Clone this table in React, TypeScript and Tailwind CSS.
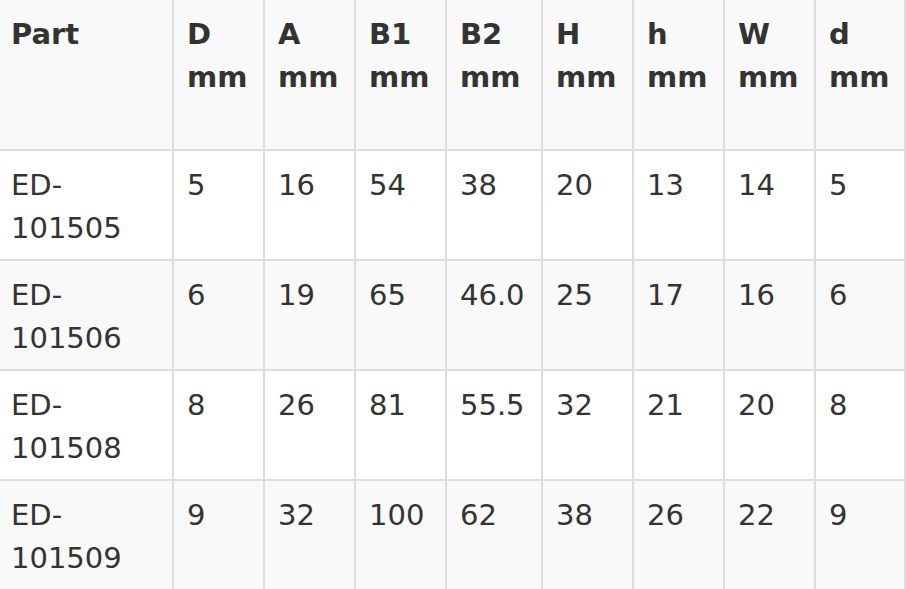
const headers = [
  ['Part', ''],
  ['D', 'mm'],
  ['A', 'mm'],
  ['B1', 'mm'],
  ['B2', 'mm'],
  ['H', 'mm'],
  ['h', 'mm'],
  ['W', 'mm'],
  ['d', 'mm'],
];

const rows = [
  ['ED-101505', '5', '16', '54', '38', '20', '13', '14', '5'],
  ['ED-101506', '6', '19', '65', '46.0', '25', '17', '16', '6'],
  ['ED-101508', '8', '26', '81', '55.5', '32', '21', '20', '8'],
  ['ED-101509', '9', '32', '100', '62', '38', '26', '22', '9'],
];

export default function App() {
  return (
    <div className="w-[906px] h-[589px] overflow-hidden bg-white font-['DejaVu_Sans',sans-serif] text-[29px] leading-[43px] text-[#333]">
      <div className="grid grid-cols-[172px_89px_89px_89px_94px_89px_89px_89px_88px] grid-rows-[149px_108px_108px_108px_108px] gap-[2px] bg-[#dddddd] pr-[2px] w-[906px]">
        {headers.map(([a, b], i) => (
          <div key={i} className={`bg-[#f9f9f9] font-bold pt-[13px] ${i === 0 ? 'pl-[11px]' : 'pl-[13px]'}`}>
            <div>{a}</div>
            {b && <div>{b}</div>}
          </div>
        ))}
        {rows.map((r, ri) =>
          r.map((c, ci) => (
            <div
              key={`${ri}-${ci}`}
              className={`${ri % 2 === 0 ? 'bg-white' : 'bg-[#f9f9f9]'} pt-[13px] ${ci === 0 ? 'pl-[11px]' : 'pl-[13px]'}`}
            >
              {ci === 0 ? (
                <>
                  <div>{c.split('-')[0]}-</div>
                  <div>{c.split('-')[1]}</div>
                </>
              ) : (
                c
              )}
            </div>
          ))
        )}
      </div>
    </div>
  );
}
